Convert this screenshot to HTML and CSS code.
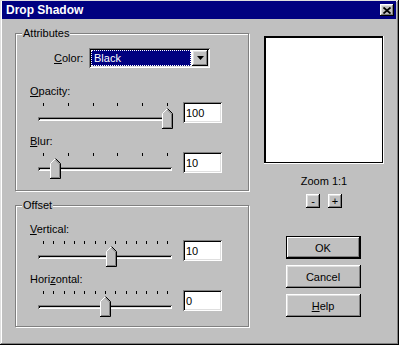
FILE: index.html
```html
<!DOCTYPE html>
<html lang="en">
<head>
    <meta charset="UTF-8">
    <meta name="viewport" content="width=device-width, initial-scale=1.0">
    <title>Drop Shadow</title>
    <link rel="stylesheet" href="styles.css">
</head>
<body>
    <div class="dialog">
        <div class="titlebar">
            <span class="title">Drop Shadow</span>
            <button class="close-btn" aria-label="Close">
                <svg width="8" height="7" viewBox="0 0 8 7"><path d="M0.5 0.5L7.5 6.5M7.5 0.5L0.5 6.5" stroke="#000" stroke-width="1.8"/></svg>
            </button>
        </div>

        <div class="dialog-body">
            <div class="left-col">
                <fieldset class="group group-attributes">
                    <legend>Attributes</legend>
                    <div class="color-row">
                        <label class="color-label"><u>C</u>olor:</label>
                        <div class="combo">
                            <div class="combo-value">Black</div>
                            <div class="combo-arrow">
                                <svg width="7" height="4" viewBox="0 0 7 4"><path d="M0 0H7L3.5 4Z" fill="#000"/></svg>
                            </div>
                        </div>
                    </div>

                    <div class="field-label"><u>O</u>pacity:</div>
                    <div class="slider-row">
                        <div class="slider">
                            <div class="ticks"><span></span><span></span><span></span><span></span><span></span><span></span></div>
                            <div class="track"></div>
                            <svg class="thumb" style="left: 124px" width="11" height="21" viewBox="0 0 11 21">
                                <path d="M0.5 20.5V5.5L5.5 0.5L10.5 5.5V20.5Z" fill="#c0c0c0"/>
                                <path d="M0.5 20V5.5L5.5 0.5" stroke="#fff" fill="none"/>
                                <path d="M5.5 0.5L10.5 5.5V20.5H0" stroke="#000" fill="none"/>
                                <path d="M5.5 2L9.5 6V19.5H1" stroke="#808080" fill="none"/>
                            </svg>
                        </div>
                        <input class="num" type="text" value="100">
                    </div>

                    <div class="field-label"><u>B</u>lur:</div>
                    <div class="slider-row">
                        <div class="slider">
                            <div class="ticks"><span></span><span></span><span></span><span></span><span></span><span></span></div>
                            <div class="track"></div>
                            <svg class="thumb" style="left: 12px" width="11" height="21" viewBox="0 0 11 21">
                                <path d="M0.5 20.5V5.5L5.5 0.5L10.5 5.5V20.5Z" fill="#c0c0c0"/>
                                <path d="M0.5 20V5.5L5.5 0.5" stroke="#fff" fill="none"/>
                                <path d="M5.5 0.5L10.5 5.5V20.5H0" stroke="#000" fill="none"/>
                                <path d="M5.5 2L9.5 6V19.5H1" stroke="#808080" fill="none"/>
                            </svg>
                        </div>
                        <input class="num" type="text" value="10">
                    </div>
                </fieldset>

                <fieldset class="group group-offset">
                    <legend>Offset</legend>
                    <div class="field-label"><u>V</u>ertical:</div>
                    <div class="slider-row">
                        <div class="slider">
                            <div class="ticks"><span></span><span></span><span></span><span></span><span></span><span></span><span></span><span></span><span></span><span></span><span></span><span></span><span></span></div>
                            <div class="track"></div>
                            <svg class="thumb" style="left: 68px" width="11" height="21" viewBox="0 0 11 21">
                                <path d="M0.5 20.5V5.5L5.5 0.5L10.5 5.5V20.5Z" fill="#c0c0c0"/>
                                <path d="M0.5 20V5.5L5.5 0.5" stroke="#fff" fill="none"/>
                                <path d="M5.5 0.5L10.5 5.5V20.5H0" stroke="#000" fill="none"/>
                                <path d="M5.5 2L9.5 6V19.5H1" stroke="#808080" fill="none"/>
                            </svg>
                        </div>
                        <input class="num" type="text" value="10">
                    </div>

                    <div class="field-label">Hori<u>z</u>ontal:</div>
                    <div class="slider-row">
                        <div class="slider">
                            <div class="ticks"><span></span><span></span><span></span><span></span><span></span><span></span><span></span><span></span><span></span><span></span><span></span><span></span><span></span></div>
                            <div class="track"></div>
                            <svg class="thumb" style="left: 62px" width="11" height="21" viewBox="0 0 11 21">
                                <path d="M0.5 20.5V5.5L5.5 0.5L10.5 5.5V20.5Z" fill="#c0c0c0"/>
                                <path d="M0.5 20V5.5L5.5 0.5" stroke="#fff" fill="none"/>
                                <path d="M5.5 0.5L10.5 5.5V20.5H0" stroke="#000" fill="none"/>
                                <path d="M5.5 2L9.5 6V19.5H1" stroke="#808080" fill="none"/>
                            </svg>
                        </div>
                        <input class="num" type="text" value="0">
                    </div>
                </fieldset>
            </div>

            <div class="right-col">
                <div class="preview"></div>
                <div class="zoom-label">Zoom 1:1</div>
                <div class="zoom-btns">
                    <button class="btn small-btn">-</button>
                    <button class="btn small-btn">+</button>
                </div>
                <div class="cmd-btns">
                    <button class="btn cmd-btn default-btn">OK</button>
                    <button class="btn cmd-btn">Cancel</button>
                    <button class="btn cmd-btn"><u>H</u>elp</button>
                </div>
            </div>
        </div>
    </div>
</body>
</html>
```

FILE: styles.css
```css
:root {
    --face: #c0c0c0;
    --shadow: #808080;
    --light: #dfdfdf;
    --title-bg: #000080;
    --raised: inset -1px -1px #000, inset 1px 1px #fff, inset -2px -2px #808080, inset 2px 2px #dfdfdf;
    --sunken: inset 1px 1px #808080, inset -1px -1px #fff, inset 2px 2px #000, inset -2px -2px #dfdfdf;
}

* {
    margin: 0;
    padding: 0;
    box-sizing: border-box;
}

body {
    background-color: var(--face);
    font-family: "Liberation Sans", Arial, sans-serif;
    font-size: 11px;
    color: #000;
}

.dialog {
    width: 399px;
    height: 345px;
    padding: 1px 3px 3px 2px;
    background-color: var(--face);
    box-shadow: inset -1px -1px #000, inset 1px 1px var(--light), inset -2px -2px var(--shadow), inset 2px 2px #fff;
}

/* Title bar */
.titlebar {
    height: 18px;
    background-color: var(--title-bg);
    display: flex;
    align-items: center;
    justify-content: space-between;
    padding: 0 2px 0 4px;
}

.title {
    color: #fff;
    font-weight: bold;
    font-size: 12px;
}

.close-btn {
    width: 14px;
    height: 12px;
    border: none;
    background-color: var(--face);
    box-shadow: var(--raised);
    display: flex;
    align-items: center;
    justify-content: center;
}

.dialog-body {
    display: flex;
    padding: 8px 0 0 13px;
}

.left-col {
    width: 234px;
}

/* Group boxes */
.group {
    border: 1px solid var(--shadow);
    box-shadow: 1px 1px 0 #fff, inset 1px 1px 0 #fff;
    min-width: 0;
}

.group legend {
    margin-left: 0;
    padding: 0 1px;
    line-height: 13px;
    background-color: var(--face);
}

.group-attributes {
    padding: 8px 0 11px 6px;
}

.group-offset {
    margin-top: 8px;
    padding: 5px 0 9px 6px;
}

.color-row {
    display: flex;
    align-items: center;
    padding-left: 32px;
    margin-bottom: 17px;
}

.color-label {
    width: 35px;
}

.combo {
    width: 121px;
    height: 20px;
    padding: 2px;
    display: flex;
    background-color: #fff;
    box-shadow: var(--sunken);
}

.combo-value {
    flex: 1;
    margin-right: 1px;
    padding-left: 2px;
    line-height: 14px;
    color: #fff;
    background-color: var(--title-bg);
    border: 1px dotted #fff;
}

.combo-arrow {
    width: 16px;
    height: 16px;
    background-color: var(--face);
    box-shadow: var(--raised);
    display: flex;
    align-items: center;
    justify-content: center;
}

.field-label {
    margin: 6px 0 4px 8px;
    line-height: 13px;
}

/* Trackbars */
.slider-row {
    display: flex;
    align-items: flex-start;
    height: 27px;
    margin-left: 8px;
}

.slider {
    position: relative;
    width: 135px;
    height: 27px;
    margin-left: 8px;
}

.ticks {
    display: flex;
    justify-content: space-between;
    padding: 0 5px;
    margin-top: 1px;
    height: 3px;
}

.ticks span {
    width: 1px;
    height: 3px;
    background-color: #000;
}

.track {
    margin-top: 11px;
    width: 134px;
    height: 4px;
    box-shadow: inset 1px 1px #808080, inset -1px -1px #fff, inset 2px 2px #000, inset -2px -2px #dfdfdf;
}

.thumb {
    position: absolute;
    top: 6px;
}

.num {
    width: 39px;
    height: 21px;
    margin-left: 10px;
    padding: 0 3px;
    border: none;
    outline: none;
    font-family: inherit;
    font-size: 11px;
    color: #000;
    background-color: #fff;
    box-shadow: var(--sunken);
}

/* Right column */
.right-col {
    width: 120px;
    margin-left: 15px;
    padding-top: 9px;
    display: flex;
    flex-direction: column;
    align-items: center;
}

.preview {
    width: 120px;
    height: 128px;
    background-color: #fff;
    box-shadow: inset -1px -1px #fff, inset -2px -2px #000, inset 2px 2px #000;
}

.zoom-label {
    margin-top: 11px;
    line-height: 13px;
}

.zoom-btns {
    display: flex;
    gap: 8px;
    margin-top: 6px;
}

.btn {
    border: none;
    background-color: var(--face);
    box-shadow: var(--raised);
    font-family: inherit;
    font-size: 11px;
    color: #000;
}

.small-btn {
    width: 14px;
    height: 14px;
    line-height: 12px;
}

.cmd-btns {
    display: flex;
    flex-direction: column;
    gap: 6px;
    margin-top: 28px;
    margin-right: 2px;
}

.cmd-btn {
    width: 75px;
    height: 23px;
}

.default-btn {
    box-shadow: inset 0 0 0 1px #000, inset -2px -2px #000, inset 2px 2px #fff, inset -3px -3px #808080;
}
```
